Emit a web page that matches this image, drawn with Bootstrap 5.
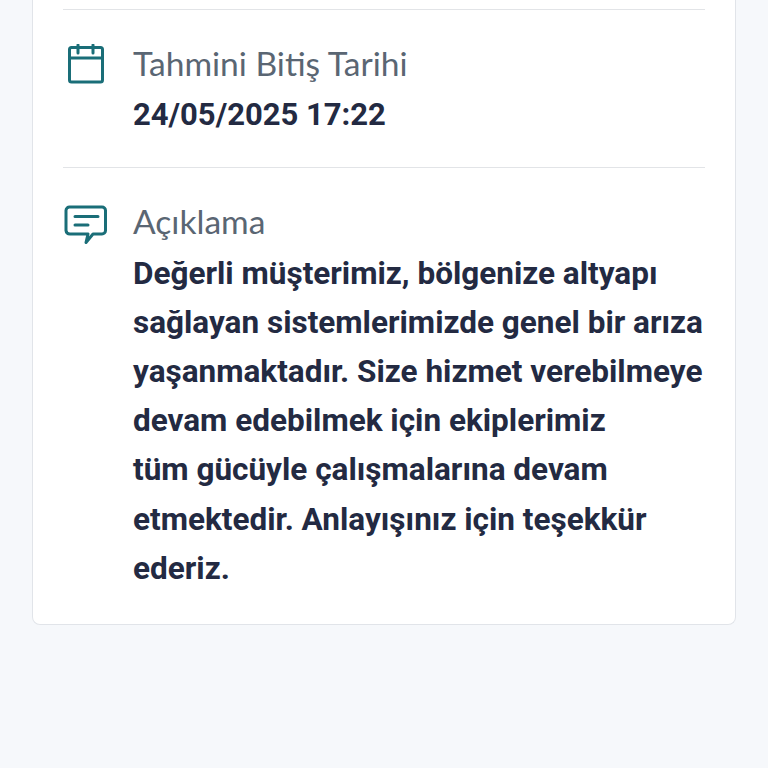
<!DOCTYPE html>
<html lang="tr"><head><meta charset="utf-8">
<link href="https://cdn.jsdelivr.net/npm/bootstrap@5.3.0/dist/css/bootstrap.min.css" rel="stylesheet">
<script src="https://cdn.jsdelivr.net/npm/bootstrap@5.3.0/dist/js/bootstrap.bundle.min.js"></script>
<style>
html,body{height:768px;overflow:hidden;background:#f6f8fb}
.sheet{width:704px;margin-left:32px;height:625px;background:#fff;border:1px solid #e1e4e9;border-top:0;border-radius:0 0 8px 8px;padding:9px 30px 0}
.info{border-top:1.5px solid #e2e4e7;padding-top:34px}
.info.one{height:157.5px}
.ico{width:70px;flex:none}
.ico svg{display:block}
.lbl{font-family:Lato,"Noto Sans",sans-serif;font-size:33.6px;line-height:40px;color:#5a6673;margin-bottom:8px;margin-top:-1px}
.one .lbl{margin-top:-1px;margin-bottom:7px}
.val{font-family:Roboto,sans-serif;font-weight:700;font-size:31.5px;line-height:49.2px;color:#232a42;white-space:nowrap}
.one .val{font-size:31px}
</style></head><body>
<div class="sheet">
<div class="info one d-flex"><div class="ico"><svg width="44" height="42" viewBox="0 0 44 42" fill="none" stroke="#1a6e78" stroke-width="3" stroke-linecap="round" stroke-linejoin="round"><rect x="6.500" y="3.500" width="33" height="34.500" rx="2"/><path d="M6.500 14h33M15 1v8M30 1v8"/></svg></div><div><div class="lbl">Tahmini Bitiş Tarihi</div><div class="val">24/05/2025 17:22</div></div></div>
<div class="info d-flex"><div class="ico"><svg width="46" height="44" viewBox="0 0 46 44" fill="none" stroke="#1a6e78" stroke-width="3" stroke-linecap="round" stroke-linejoin="round"><path d="M7 5h32a3.500 3.500 0 0 1 3.500 3.500v20a3.500 3.500 0 0 1-3.500 3.500h-9l-7 8.500 2-8.500H7a4 4 0 0 1-4-3.500v-20A3.500 3.500 0 0 1 7 5zM12 14.500h23M12 23h13"/></svg></div><div><div class="lbl">Açıklama</div><div class="val">Değerli müşterimiz, bölgenize altyapı<br>sağlayan sistemlerimizde genel bir arıza<br>yaşanmaktadır. Size hizmet verebilmeye<br>devam edebilmek için ekiplerimiz<br>tüm gücüyle çalışmalarına devam<br>etmektedir. Anlayışınız için teşekkür<br>ederiz.</div></div></div>
</div>
</body></html>
